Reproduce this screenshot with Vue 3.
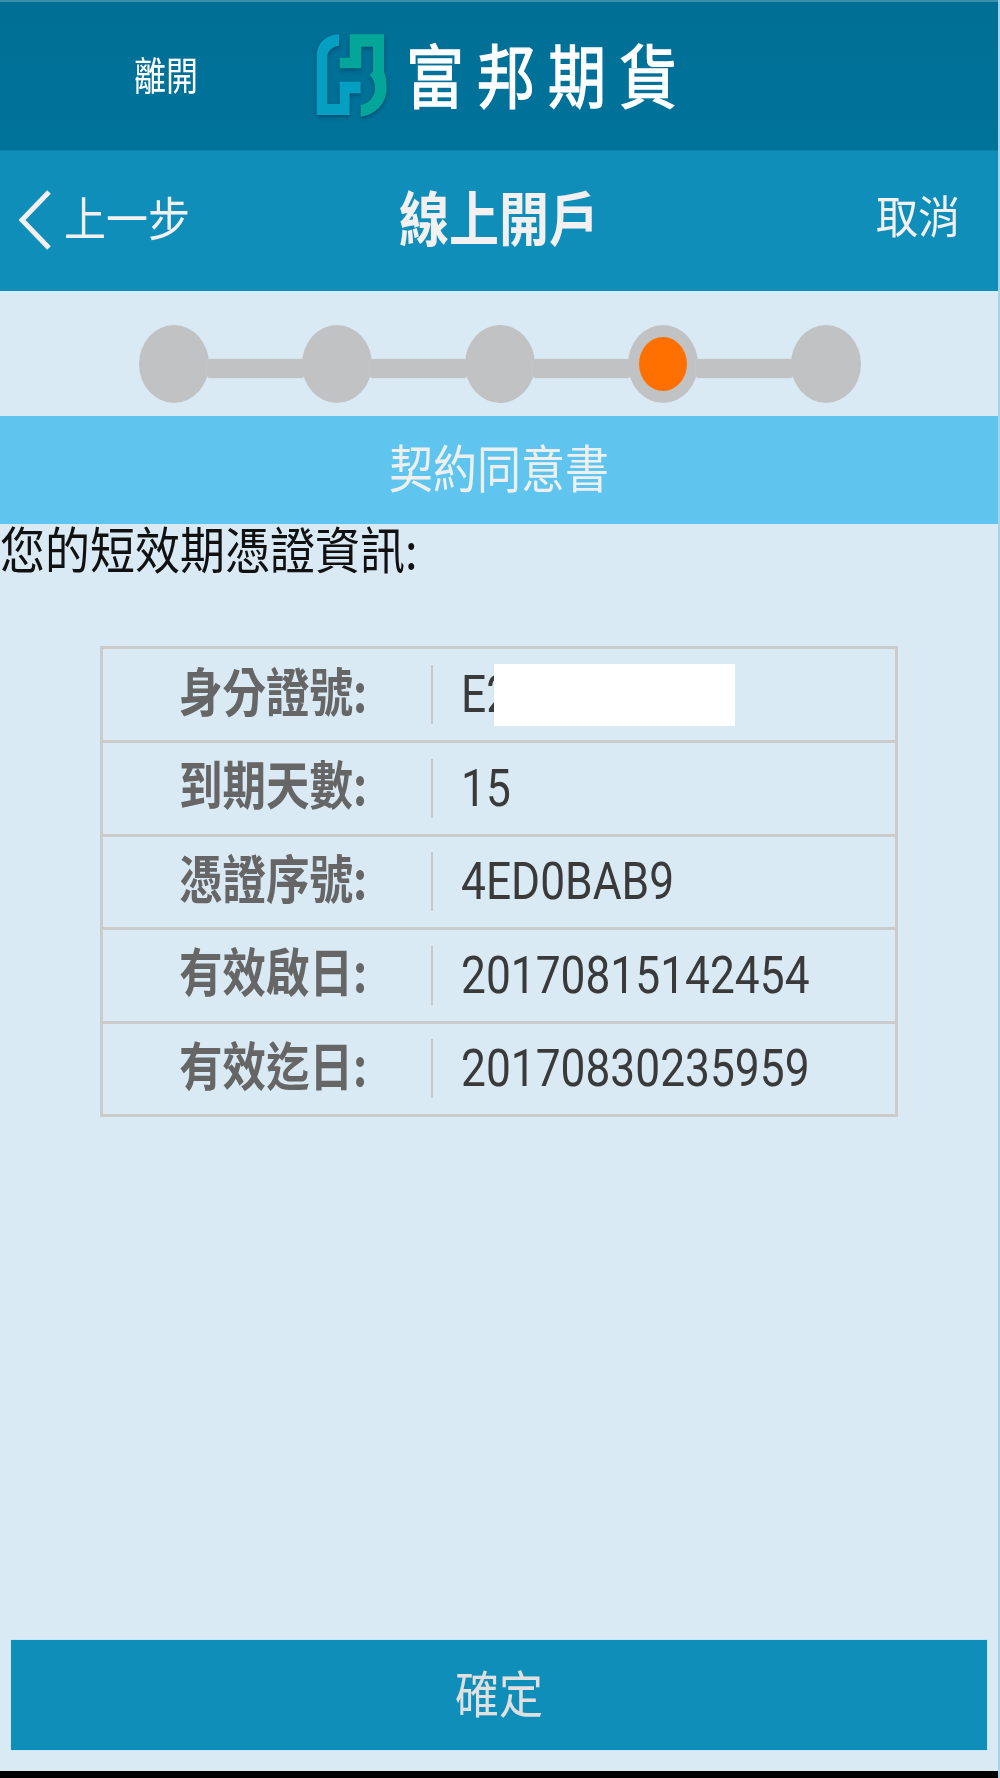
<script setup>
const steps = [false, false, false, true, false]
const rows = [
  { label: '身分證號:', value: 'E2', masked: true },
  { label: '到期天數:', value: '15' },
  { label: '憑證序號:', value: '4ED0BAB9' },
  { label: '有效啟日:', value: '20170815142454' },
  { label: '有效迄日:', value: '20170830235959' }
]
</script>

<template>
  <div class="page">
    <header class="top">
      <a class="leave"><span class="tall">離開</span></a>
      <svg class="logo" viewBox="0 0 285 300" aria-hidden="true">
        <path class="logo-blue" d="M105 28C65 30 38 55 38 95V270H137V205H170V170H107V237H70V95C70 78 85 65 105 62Z" />
        <path class="logo-green" d="M137 28H240V140C246 155 248 172 248 190C248 235 215 270 170 275V240C195 237 213 215 213 190C213 172 207 160 197 150L207 138V65H172V130H107V98H137Z" />
      </svg>
      <span class="brand">富邦期貨</span>
    </header>

    <nav class="bar">
      <svg class="chev" viewBox="0 0 32 60" aria-hidden="true"><path d="M30 2L3 30L30 58" /></svg>
      <span class="back">上一步</span>
      <h1 class="title">線上開戶</h1>
      <span class="cancel">取消</span>
    </nav>

    <main class="content">
      <div class="steps">
        <template v-for="(active, i) in steps" :key="i">
          <span v-if="i" class="link"></span>
          <span class="dot"><span v-if="active" class="dot-on"></span></span>
        </template>
      </div>

      <div class="section"><span class="section-text">契約同意書</span></div>
      <p class="intro"><span class="intro-text">您的短效期憑證資訊:</span></p>

      <div class="table">
        <div v-for="row in rows" :key="row.label" class="row">
          <div class="label"><span>{{ row.label }}</span></div>
          <div class="value">
            <span class="value-text">{{ row.value }}</span>
            <span v-if="row.masked" class="mask"></span>
          </div>
        </div>
      </div>

      <button class="ok"><span class="ok-text">確定</span></button>
    </main>
    <div class="base"></div>
  </div>
</template>

<style>
html, body { margin: 0; background: #000; }
</style>

<style scoped>
.page {
  width: 1000px;
  height: 1778px;
  box-sizing: border-box;
  border-right: 2px solid #a9d4e6;
  display: flex;
  flex-direction: column;
  overflow: hidden;
  font-family: "Noto Sans CJK TC", "Liberation Sans", sans-serif;
  background: #daeaf5;
}
.tall { display: inline-block; transform: scaleY(1.2); }

.top {
  height: 150px;
  flex: none;
  box-sizing: border-box;
  border-top: 2px solid #3f8fab;
  background: linear-gradient(#006f96, #00739a);
  display: flex;
  align-items: center;
}
.leave {
  margin: -6px 0 0 134px;
  width: 64px;
  flex: none;
  color: #fff;
  font-size: 32px;
  line-height: 40px;
}
.logo {
  flex: none;
  width: 95px;
  height: 100px;
  margin: -2px 0 0 106px;
  filter: drop-shadow(0 2px 2px rgba(0, 50, 80, .55));
}
.logo-blue { fill: #049fc1; }
.logo-green { fill: #03a698; }
.brand {
  margin: -7px 0 0 7px;
  color: #fff;
  font-size: 58px;
  font-weight: 400;
  -webkit-text-stroke: 1.2px #fff;
  letter-spacing: 13px;
  line-height: 70px;
  white-space: nowrap;
  transform: scaleY(1.2);
}

.bar {
  height: 141px;
  flex: none;
  box-sizing: border-box;
  background: #108eba;
  border-top: 1px solid #0d80aa;
  display: flex;
  align-items: center;
  color: #f2f0f0;
}
.chev {
  width: 32px;
  height: 60px;
  margin-left: 19px;
  margin-top: -2px;
  flex: none;
}
.chev path { fill: none; stroke: #f2f0f0; stroke-width: 5; }
.back {
  margin: -11px 0 0 13px;
  font-size: 42px;
  line-height: 48px;
  width: 122px;
  flex: none;
  white-space: nowrap;
  transform: scaleY(1.12);
}
.title {
  margin: -13px 0 0 213px;
  font-size: 50px;
  font-weight: 700;
  line-height: 60px;
  width: 200px;
  flex: none;
  white-space: nowrap;
  transform: scaleY(1.18);
}
.cancel {
  margin: -12px 0 0 277px;
  font-size: 42px;
  line-height: 48px;
  flex: none;
  white-space: nowrap;
  transform: scaleY(1.08);
}

.content {
  flex: 1;
  min-height: 0;
  display: flex;
  flex-direction: column;
}
.steps {
  height: 78px;
  margin-top: 34px;
  padding-left: 139px;
  display: flex;
  align-items: center;
}
.dot {
  width: 70px;
  height: 78px;
  flex: none;
  border-radius: 50%;
  background: #c1c2c4;
  display: flex;
  align-items: center;
  justify-content: center;
}
.dot-on {
  width: 48px;
  height: 54px;
  border-radius: 50%;
  background: #ff7000;
}
.link {
  width: 97px;
  margin: 9px -2px 0;
  height: 19px;
  flex: none;
  border-radius: 3px;
  background: #c1c2c4;
  box-shadow: 0 0 2px #cfd3d6;
}
.section {
  height: 108px;
  margin-top: 13px;
  flex: none;
  background: #5fc5ef;
  display: flex;
  align-items: center;
  justify-content: center;
  color: #eef0f0;
  font-size: 44px;
}
.section-text { transform: scaleY(1.16); line-height: 60px; margin-top: -9px; }
.intro {
  margin: 0;
  height: 60px;
  color: #111;
  font-size: 45px;
  line-height: 48px;
}
.intro-text { display: inline-block; transform: scaleY(1.12); white-space: nowrap; }

.table {
  margin: 62px 0 0 100px;
  width: 798px;
  box-sizing: border-box;
  border: 3px solid #cbcbcb;
  flex: none;
}
.row {
  height: 91px;
  display: flex;
  align-items: center;
}
.row + .row {
  height: 93.5px;
  border-top: 3px solid #cbcbcb;
  box-sizing: border-box;
}
.label {
  width: 328px;
  flex: none;
  box-sizing: border-box;
  padding: 0 0 10px 76px;
  color: #666;
  font-size: 43.5px;
  font-weight: 700;
  line-height: 60px;
  white-space: nowrap;
}
.label span { display: inline-block; transform: scaleY(1.2); }
.value {
  height: 59px;
  flex: 1;
  border-left: 2px solid #c8c8c8;
  box-sizing: border-box;
  padding-left: 28px;
  display: flex;
  align-items: center;
  position: relative;
  font-family: Roboto, "Liberation Sans", sans-serif;
  font-size: 44.3px;
  color: #3a3a3a;
}
.value-text { display: inline-block; transform: scaleY(1.18); line-height: 59px; }
.mask {
  position: absolute;
  left: 61px;
  top: -1px;
  width: 241px;
  height: 62px;
  background: #fff;
}
.ok {
  display: flex;
  align-items: center;
  justify-content: center;
  margin: auto 11px 21px;
  width: 976px;
  height: 110px;
  flex: none;
  padding: 0;
  border: 0;
  background: #108eba;
  box-shadow: 0 0 1px #7fc0da;
  color: #e0e0e0;
  font-family: inherit;
  font-size: 44px;
}
.ok-text { transform: scaleY(1.14); line-height: 60px; margin-top: -8px; }
.base { height: 7px; flex: none; background: #000; }
</style>
